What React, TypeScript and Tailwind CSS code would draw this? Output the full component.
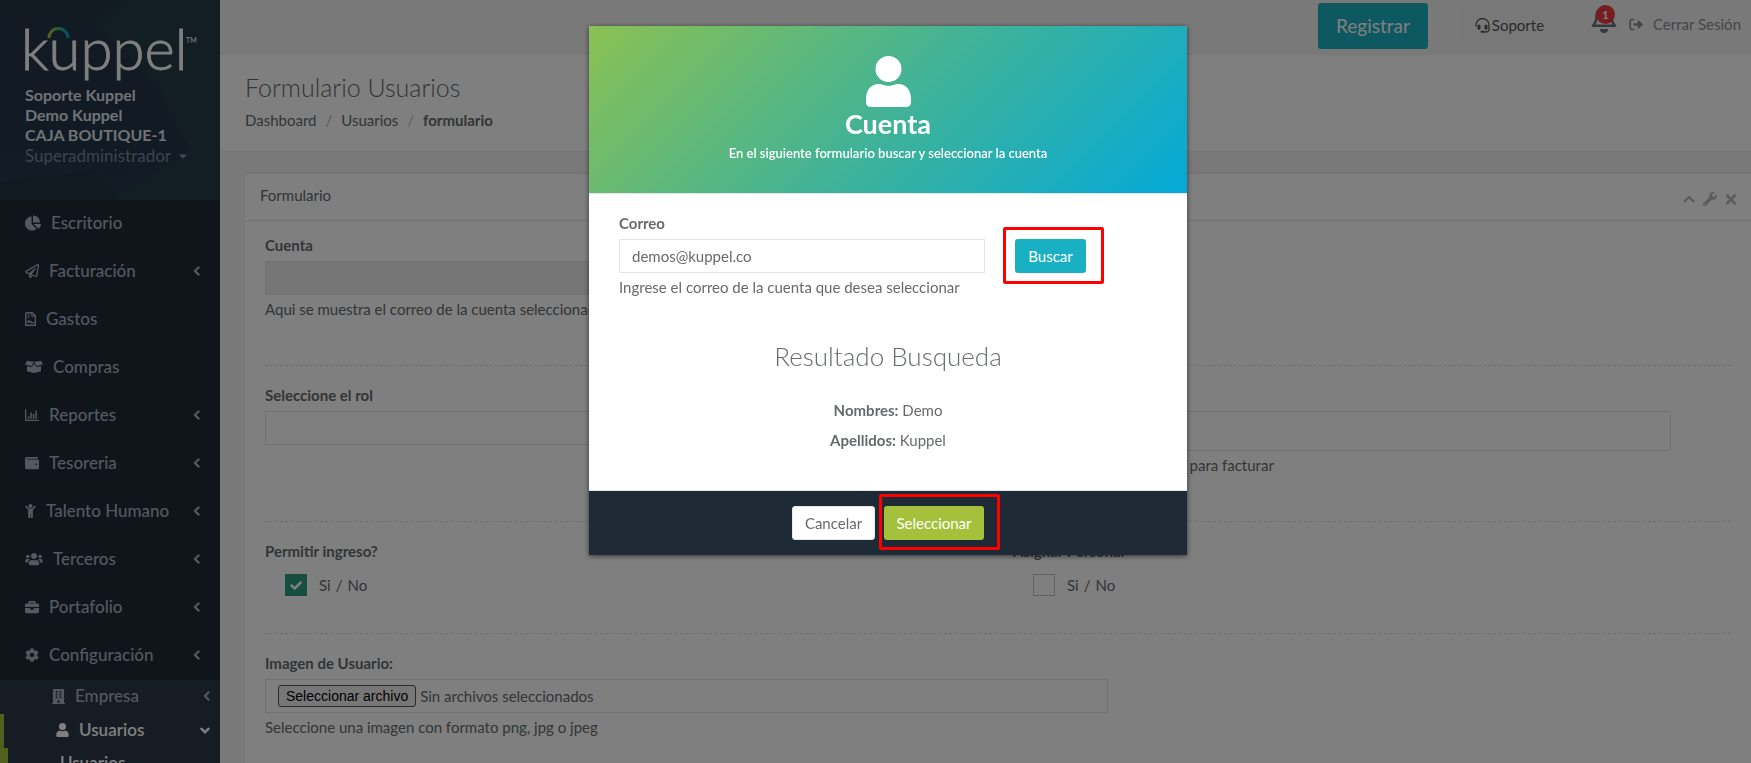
import type { ComponentType, ReactNode } from "react"
import {
  FaBoxOpen,
  FaBriefcase,
  FaBuilding,
  FaCaretDown,
  FaChartPie,
  FaChild,
  FaCog,
  FaRegPaperPlane,
  FaTimes,
  FaUsers,
  FaWallet,
  FaWrench,
} from "react-icons/fa"

type IconProps = { className?: string }

interface MenuItem {
  label: string
  icon: ComponentType<IconProps>
  size: string
  arrow?: boolean
}

function UserIcon({ className }: IconProps) {
  return (
    <svg viewBox="0 0 45 51" fill="currentColor" className={className} aria-hidden="true">
      <ellipse cx="22.5" cy="13" rx="13" ry="13" />
      <path d="M13 28c3 0 5 1.800 9.500 1.800S29 28 32 28c9 0 13 7 13 15v3c0 3-2 5-5 5H5c-3 0-5-2-5-5v-3c0-8 4-15 13-15z" />
    </svg>
  )
}

function BarChartIcon({ className }: IconProps) {
  return (
    <svg viewBox="0 0 14 14" fill="currentColor" className={className} aria-hidden="true">
      <path d="M0 1h1.300v10.700H14V13H0zM2.800 8.300h1.500v2.400H2.800zM5.300 4.500h1.500v6.200H5.300zM7.800 6h1.500v4.700H7.800zM10.300 2.500h1.500v8.200h-1.500z" />
    </svg>
  )
}

function ReceiptIcon({ className }: IconProps) {
  return (
    <svg viewBox="0 0 11 14" fill="none" stroke="currentColor" className={className} aria-hidden="true">
      <path d="M1.500.7h5.600l3.200 3.200v9.400H.7V1.500z" strokeWidth="1.400" />
      <path d="M6.800.8v3.400h3.400M2.400 3h2.400M2.400 5h2.400" strokeWidth="1" />
      <path d="M2.200 10.900l1.500-2.300 1.300 1.700.9-.9.900 1.300h2" strokeWidth="1.300" />
    </svg>
  )
}

function HeadsetIcon({ className }: IconProps) {
  return (
    <svg viewBox="0 0 15 15" fill="none" stroke="currentColor" className={className} aria-hidden="true">
      <path d="M1 8.500V7a6.500 6.500 0 0 1 13 0v4.500a2.300 2.300 0 0 1-2.300 2.300H8" strokeWidth="1.300" />
      <path d="M4 8v2.200M11 8v2.200" strokeWidth="3" strokeLinecap="round" />
      <path d="M6.500 13.800h2" strokeWidth="2" strokeLinecap="round" />
    </svg>
  )
}

function BellIcon({ className }: IconProps) {
  return (
    <svg viewBox="0 0 26 28" fill="none" stroke="currentColor" className={className} aria-hidden="true">
      <path d="M13 0v3" strokeWidth="2.500" />
      <path
        d="M2 20.800h22c-2.500-2.500-3.500-5-3.500-9.800C20.500 6 17.500 3.500 13 3.500S5.500 6 5.500 11c0 4.800-1 7.300-3.500 9.800z"
        strokeWidth="2.600"
        strokeLinejoin="round"
      />
      <path d="M9 24h8a4 4 0 0 1-8 0z" fill="currentColor" stroke="none" />
    </svg>
  )
}

function SignOutIcon({ className }: IconProps) {
  return (
    <svg viewBox="0 0 15 13" fill="none" stroke="currentColor" className={className} aria-hidden="true">
      <path d="M5.500 1.500h-2a2.300 2.300 0 0 0-2.300 2.300v5.400a2.300 2.300 0 0 0 2.300 2.300h2" strokeWidth="1.700" />
      <path d="M4.800 5.200h4V1.800l5.500 4.700-5.500 4.700V7.800h-4z" fill="currentColor" stroke="none" />
    </svg>
  )
}

function ArrowLeft({ className }: IconProps) {
  return (
    <svg viewBox="0 0 7 10" fill="none" stroke="currentColor" strokeWidth="2.200" className={className} aria-hidden="true">
      <path d="M6.200.8L2 5l4.200 4.200" />
    </svg>
  )
}

function ArrowDown({ className }: IconProps) {
  return (
    <svg viewBox="0 0 10 7" fill="none" stroke="currentColor" strokeWidth="2.400" className={className} aria-hidden="true">
      <path d="M.8 1L5 5.200 9.200 1" />
    </svg>
  )
}

function ArrowUp({ className }: IconProps) {
  return (
    <svg viewBox="0 0 12 8" fill="none" stroke="currentColor" strokeWidth="2.400" className={className} aria-hidden="true">
      <path d="M.9 7L6 1.900 11.100 7" />
    </svg>
  )
}

const menu: MenuItem[] = [
  { label: "Escritorio", icon: FaChartPie, size: "h-4 w-4" },
  { label: "Facturación", icon: FaRegPaperPlane, size: "h-[14px] w-[14px]", arrow: true },
  { label: "Gastos", icon: ReceiptIcon, size: "h-[14px] w-[11px]" },
  { label: "Compras", icon: FaBoxOpen, size: "h-[14px] w-[18px]" },
  { label: "Reportes", icon: BarChartIcon, size: "h-[14px] w-[14px]", arrow: true },
  { label: "Tesoreria", icon: FaWallet, size: "h-[14px] w-[14px]", arrow: true },
  { label: "Talento Humano", icon: FaChild, size: "h-[14px] w-[11px]", arrow: true },
  { label: "Terceros", icon: FaUsers, size: "h-[14px] w-[18px]", arrow: true },
  { label: "Portafolio", icon: FaBriefcase, size: "h-[14px] w-[14px]", arrow: true },
  { label: "Configuración", icon: FaCog, size: "h-[14px] w-[14px]", arrow: true },
]

function Logo() {
  return (
    <svg viewBox="-5 -15 185 80" className="-ml-[5px] block h-20 w-[185px] overflow-visible" role="img" aria-label="kuppel">
      <defs>
        <linearGradient id="arc" x1="0" x2="1">
          <stop offset="0.1" stopColor="#a5c13b" />
          <stop offset="0.9" stopColor="#00a9c4" />
        </linearGradient>
      </defs>
      <text x="-4" y="45" fontSize="58" fill="#fff" stroke="#fff" strokeWidth="0.800" className="font-[Lato] font-light">
        kuppel
      </text>
      <path d="M24 13a9.500 9.500 0 0 1 19 0" fill="none" stroke="url(#arc)" strokeWidth="3" />
      <text x="161" y="18" fontSize="7" fill="#fff" className="font-[Lato]">
        TM
      </text>
    </svg>
  )
}

function Sidebar() {
  return (
    <nav className="w-[220px] shrink-0 bg-[#1e2b36] font-[Lato,sans-serif] text-[#a7b1c2]">
      <div className="relative h-[200px] bg-[#26384a] px-[25px] pt-2.5">
        <svg viewBox="0 0 220 200" className="absolute inset-0 h-full w-full" aria-hidden="true">
          <path d="M0 0h125L98 25 0 15z" fill="#263645" />
          <path d="M98 25L160 88 190 152 108 180 95 165 0 150V15z" fill="#243546" />
          <path d="M125 0h95v200H110l80-48-30-64-62-63z" fill="#253a48" />
          <path d="M0 182l95-12 25 30H0z" fill="#243442" />
        </svg>
        <div className="relative">
          <Logo />
          <div className="-mt-[5px] text-base leading-5 font-bold text-[#dfe4ed]">
            <p>Soporte Kuppel</p>
            <p>Demo Kuppel</p>
            <p>CAJA BOUTIQUE-1</p>
          </div>
          <a href="#" className="mt-px flex items-center gap-1.5 text-[17px] leading-5 text-[#76889a]">
            Superadministrador
            <FaCaretDown className="h-3 w-3 text-[#8095a8]" />
          </a>
        </div>
      </div>
      <ul className="text-[17px] font-medium">
        {menu.map(({ label, icon: Icon, size, arrow }) => (
          <li key={label}>
            <a href="#" className="flex h-12 items-center pr-5 pb-0.5 pl-[25px]">
              <Icon className={size} />
              <span className="ml-2.5">{label}</span>
              {arrow && <ArrowLeft className="ml-auto h-2.5 w-[7px]" />}
            </a>
          </li>
        ))}
      </ul>
      <ul className="bg-[#2b3846] text-[17px] font-medium">
        <li>
          <a href="#" className="flex h-[34px] items-center pr-2.5 pb-0.5 pl-[52px]">
            <FaBuilding className="h-[15px] w-[13px]" />
            <span className="ml-2.5">Empresa</span>
            <ArrowLeft className="ml-auto h-2.5 w-[7px]" />
          </a>
        </li>
        <li className="border-l-4 border-[#a5c13b] font-semibold text-white">
          <a href="#" className="flex h-[34px] items-center pr-2.5 pb-0.5 pl-[52px]">
            <UserIcon className="h-[14px] w-[13px]" />
            <span className="ml-2.5">Usuarios</span>
            <ArrowDown className="ml-auto h-[7px] w-2.5" />
          </a>
        </li>
        <li className="border-l-8 border-[#a5c13b] font-semibold text-white">
          <a href="#" className="flex h-8 items-center pb-0.5 pl-[52px]">
            Usuarios
          </a>
        </li>
      </ul>
    </nav>
  )
}

function TopBar() {
  return (
    <header className="flex h-[55px] items-start justify-end pr-2.5">
      <button className="mt-[3px] h-[46px] w-[110px] rounded-[3px] bg-[#1ab1c3] text-[19px] text-white">Registrar</button>
      <button className="mt-2 ml-[34px] flex h-[34px] w-[95px] items-center justify-center gap-0.5 rounded-[3px] bg-[#f0f0f0] text-[15px] text-[#555]">
        <HeadsetIcon className="h-[15px] w-[15px]" />
        Soporte
      </button>
      <button className="relative mt-[5px] ml-[34px] text-[#6d7276]" aria-label="Notificaciones">
        <BellIcon className="h-7 w-[26px]" />
        <span className="absolute top-0 left-[5px] h-[19px] w-[19px] rounded-full bg-[#ed3a45] text-[11px] leading-[19px] font-bold text-white">
          1
        </span>
      </button>
      <a href="#" className="mt-[14px] ml-3 flex items-center gap-[9px] text-[15px] leading-5 text-[#8a8d90]">
        <SignOutIcon className="h-[13px] w-[15px]" />
        Cerrar Sesión
      </a>
    </header>
  )
}

function Field({ id, label, hint, children }: { id: string; label: string; hint?: string; children: ReactNode }) {
  return (
    <div>
      <label htmlFor={id} className="mb-1.5 block leading-5 font-bold">
        {label}
      </label>
      {children}
      {hint && <p className="mt-1 leading-5">{hint}</p>}
    </div>
  )
}

function Check({ id, label, checked }: { id: string; label: string; checked?: boolean }) {
  return (
    <div>
      <p className="leading-5 font-bold">{label}</p>
      <label htmlFor={id} className="mt-[13px] ml-5 flex items-center gap-3 leading-5">
        <span className="relative h-[22px] w-[22px]">
          <input
            id={id}
            type="checkbox"
            defaultChecked={checked}
            className="peer block h-[22px] w-[22px] appearance-none border border-[#c4c4c4] bg-white checked:border-[#2b9a7e] checked:bg-[#2b9a7e]"
          />
          <svg
            viewBox="0 0 22 22"
            className="pointer-events-none absolute inset-0 hidden peer-checked:block"
            fill="none"
            stroke="#fff"
            strokeWidth="2.500"
            strokeLinecap="round"
            strokeLinejoin="round"
            aria-hidden="true"
          >
            <path d="M6.500 11.500l3.200 3 6-6" />
          </svg>
        </span>
        <span className="flex gap-[5px]">
          <span>Si</span>
          <span>/</span>
          <span>No</span>
        </span>
      </label>
    </div>
  )
}

function UserForm() {
  return (
    <section className="mt-5 ml-[25px] flex-1 border-t-2 border-[#e7eaec] bg-white">
      <div className="flex h-[47px] items-center justify-between border-b border-[#e7eaec] pr-[14px] pl-[15px]">
        <h5 className="pb-1">Formulario</h5>
        <div className="flex items-center gap-2 pt-1 text-[#b8b8b8]">
          <button aria-label="Contraer">
            <ArrowUp className="h-2 w-3" />
          </button>
          <button aria-label="Configurar">
            <FaWrench className="h-[14px] w-[14px]" />
          </button>
          <button aria-label="Cerrar">
            <FaTimes className="h-[15px] w-3" />
          </button>
        </div>
      </div>
      <form className="px-5 pt-[14px]">
        <div className="grid grid-cols-2 gap-x-[30px]">
          <Field id="cuenta" label="Cuenta" hint="Aqui se muestra el correo de la cuenta seleccionada">
            <input id="cuenta" disabled className="block h-[34px] w-full border border-[#e0e2e4] bg-[#ececec] px-3" />
          </Field>
        </div>
        <hr className="mt-[46px] border-dashed border-[#dcdfe1]" />
        <div className="mt-[19px] grid grid-cols-2 gap-x-[30px]">
          <Field id="rol" label="Seleccione el rol">
            <select id="rol" className="block h-[34px] w-full appearance-none border border-[#dfe1e3] bg-white px-3" />
          </Field>
          <Field id="caja" label="Caja" hint="Seleccione la caja indicada para facturar">
            <input id="caja" className="block h-10 w-11/12 rounded-[3px] border border-[#dfe1e3] bg-white px-3" />
          </Field>
        </div>
        <hr className="mt-[46px] border-dashed border-[#dcdfe1]" />
        <div className="mt-[19px] grid grid-cols-2 gap-x-[30px]">
          <Check id="ingreso" label="Permitir ingreso?" checked />
          <Check id="personal" label="Asignar Personal" />
        </div>
        <hr className="mt-[37px] border-dashed border-[#dcdfe1]" />
        <div className="mt-[19px] grid grid-cols-12 gap-x-[30px]">
          <div className="col-span-7">
            <Field id="imagen" label="Imagen de Usuario:" hint="Seleccione una imagen con formato png, jpg o jpeg">
              <label htmlFor="imagen" className="flex h-[34px] items-center gap-1 border border-[#dfe1e3] px-3">
                <input id="imagen" type="file" className="sr-only" />
                <span className="rounded-[3px] border border-[#555] bg-[#efefef] px-[7px] font-[Liberation_Sans] text-sm leading-5 text-black">
                  Seleccionar archivo
                </span>
                Sin archivos seleccionados
              </label>
            </Field>
          </div>
        </div>
      </form>
    </section>
  )
}

function AccountModal() {
  return (
    <div className="fixed inset-0 flex items-start justify-center bg-black/50 pt-[26px] pl-[25px]">
      <div
        role="dialog"
        aria-label="Cuenta"
        className="w-[598px] bg-white text-center text-[15px] text-[#676a6c] shadow-[0_1px_5px_rgba(0,0,0,0.6)]"
      >
        <div className="flex h-[167px] flex-col items-center bg-linear-[135deg,#8bc053,#42b395_50%,#03a9d9] pt-[30px] text-white">
          <UserIcon className="h-[51px] w-[45px]" />
          <h4 className="mt-px text-[27px] leading-8 font-bold">Cuenta</h4>
          <p className="mt-[3px] text-[13px] leading-5 font-semibold">
            En el siguiente formulario buscar y seleccionar la cuenta
          </p>
        </div>
        <div className="border-y border-[#e3e6e8] px-[30px] pt-[19px] pb-10">
          <div className="flex items-start gap-[30px] text-left">
            <div className="w-[366px]">
              <Field id="correo" label="Correo" hint="Ingrese el correo de la cuenta que desea seleccionar">
                <input
                  id="correo"
                  defaultValue="demos@kuppel.co"
                  className="block h-[34px] w-full border border-[#e5e6e7] bg-white px-3"
                />
              </Field>
            </div>
            <div className="relative mt-[26px]">
              <button className="h-[34px] w-[71px] rounded-[3px] bg-[#1ab0c3] text-white">Buscar</button>
              <span className="pointer-events-none absolute -top-3 -right-[18px] -bottom-[11px] -left-3 rounded-[2px] border-3 border-[#ff0000]" />
            </div>
          </div>
          <h2 className="mt-[43px] text-[26px] leading-8 font-light">Resultado Busqueda</h2>
          <p className="mt-7 leading-5">
            <b>Nombres:</b> Demo
          </p>
          <p className="mt-2.5 leading-5">
            <b>Apellidos:</b> Kuppel
          </p>
        </div>
        <div className="flex h-16 items-center justify-center gap-[9px] bg-[#1e2a35]">
          <button className="h-[34px] w-[83px] rounded-[3px] border border-[#e7eaec] bg-white">Cancelar</button>
          <div className="relative">
            <button className="block h-[34px] w-[100px] rounded-[3px] bg-[#a5c13b] text-white">Seleccionar</button>
            <span className="pointer-events-none absolute -top-3 -right-4 -bottom-2.5 -left-[5px] rounded-[2px] border-3 border-[#ff0000]" />
          </div>
        </div>
      </div>
    </div>
  )
}

export default function App() {
  return (
    <div className="flex h-screen overflow-hidden bg-[#f3f3f4] font-[Lato,sans-serif] text-[15px] text-[#676a6c]">
      <Sidebar />
      <main className="flex min-w-0 flex-1 flex-col">
        <TopBar />
        <div className="h-[97px] border-b border-[#e7eaec] bg-white px-[25px] pt-4">
          <h2 className="text-[25px] leading-8 font-light">Formulario Usuarios</h2>
          <ol className="mt-[7px] flex leading-5">
            <li>
              <a href="#">Dashboard</a>
            </li>
            <li className="before:px-[9px] before:text-[#bbb] before:content-['/']">
              <a href="#">Usuarios</a>
            </li>
            <li className="before:px-[9px] before:text-[#bbb] before:content-['/']">
              <strong>formulario</strong>
            </li>
          </ol>
        </div>
        <UserForm />
      </main>
      <AccountModal />
    </div>
  )
}
